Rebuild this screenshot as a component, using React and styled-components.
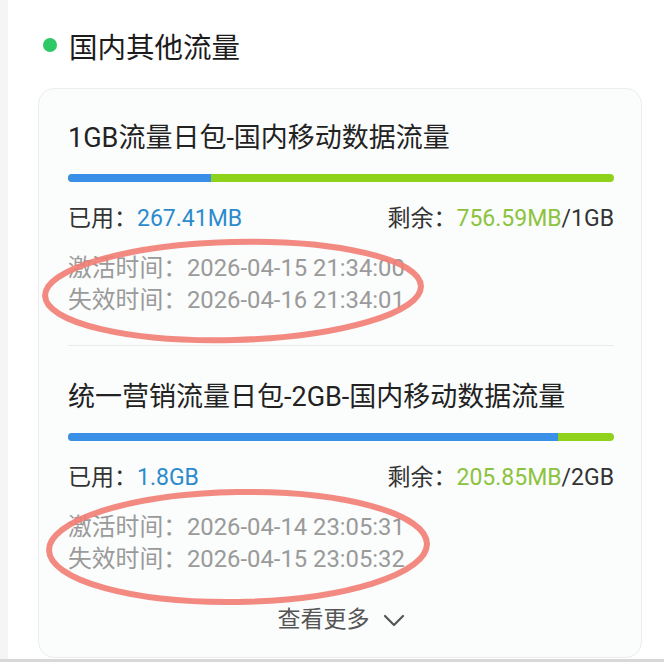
import React from 'react'
import styled, { createGlobalStyle } from 'styled-components'

const GlobalStyle = createGlobalStyle`
    html, body {
        margin: 0;
        padding: 0;
        background: #f5f5f5;
    }
    body {
        font-family: Roboto, "Noto Sans CJK SC", sans-serif;
    }
`

const Page = styled.div`
    width: 664px;
    height: 662px;
    overflow: hidden;
    background: #f5f5f5;
    border-bottom: 3px solid #d8d8d8;
    box-sizing: border-box;
`

const Panel = styled.div`
    margin-left: 8px;
    height: 659px;
    background: #ffffff;
    padding: 25px 22px 0 30px;
    box-sizing: border-box;
`

const Heading = styled.div`
    display: flex;
    align-items: center;
    gap: 12px;
    height: 40px;
    padding-left: 5px;
    font-size: 28.5px;
    color: #1c1c1c;
`

const Dot = styled.span`
    width: 14px;
    height: 14px;
    border-radius: 50%;
    background: #2ec866;
`

const Card = styled.div`
    margin-top: 23px;
    border: 1px solid #e9edef;
    border-radius: 16px;
    background: #fbfcfc;
    padding: 31px 27px 20px 29px;
    height: 570px;
    box-sizing: border-box;
`

const Item = styled.div`
    padding-bottom: 29px;
    border-bottom: 1px solid #ebebeb;

    & + & {
        padding-top: 33px;
        padding-bottom: 0;
        border-bottom: none;
    }
`

const Title = styled.div`
    font-size: 27px;
    line-height: 36px;
    color: #222;
    white-space: nowrap;
`

const Bar = styled.div`
    display: flex;
    height: 8px;
    margin-top: 18px;
    border-radius: 4px;
    overflow: hidden;
    background: #8fd21b;
`

const BarUsed = styled.div`
    height: 100%;
    background: #3a8fe6;
`

const UsageRow = styled.div`
    display: flex;
    justify-content: space-between;
    margin-top: 21px;
    font-size: 23px;
    line-height: 32px;
    color: #333;
`

const Value = styled.span`
    color: ${p => (p.$tone === 'green' ? '#8cc33e' : '#2c8bcc')};
`

const Dates = styled.div`
    position: relative;
    margin-top: 17px;
    font-size: 23.8px;
    line-height: 32px;
    color: #9a9a9a;
    white-space: nowrap;
`

const Circle = styled.svg`
    position: absolute;
    pointer-events: none;
    overflow: visible;
`

const More = styled.div`
    display: flex;
    justify-content: center;
    align-items: center;
    gap: 13px;
    margin-top: 29px;
    font-size: 23px;
    line-height: 32px;
    color: #555;
`

const packs = [
    {
        name: '1GB流量日包-国内移动数据流量',
        used: '267.41MB',
        left: '756.59MB',
        total: '1GB',
        pct: 26.1,
        start: '2026-04-15 21:34:00',
        end: '2026-04-16 21:34:01',
        mark: { left: -26, top: -13, w: 382, h: 104, rot: -1.5 },
    },
    {
        name: '统一营销流量日包-2GB-国内移动数据流量',
        used: '1.8GB',
        left: '205.85MB',
        total: '2GB',
        pct: 89.8,
        start: '2026-04-14 23:05:31',
        end: '2026-04-15 23:05:32',
        mark: { left: -22, top: -22, w: 384, h: 116, rot: -1 },
    },
]

function Mark({ left, top, w, h, rot }) {
    return (
        <Circle
            width={w}
            height={h}
            viewBox={`0 0 ${w} ${h}`}
            style={{ left, top }}
        >
            <ellipse
                cx={w / 2}
                cy={h / 2}
                rx={w / 2 - 3}
                ry={h / 2 - 3}
                fill="none"
                stroke="#f27d74"
                strokeOpacity="0.9"
                strokeWidth="6"
                transform={`rotate(${rot} ${w / 2} ${h / 2})`}
            />
        </Circle>
    )
}

function App() {
    return (
        <>
            <GlobalStyle />
            <Page>
                <Panel>
                    <Heading>
                        <Dot />
                        国内其他流量
                    </Heading>
                    <Card>
                        {packs.map(p => (
                            <Item key={p.name}>
                                <Title>{p.name}</Title>
                                <Bar>
                                    <BarUsed style={{ width: `${p.pct}%` }} />
                                </Bar>
                                <UsageRow>
                                    <span>
                                        已用：<Value>{p.used}</Value>
                                    </span>
                                    <span>
                                        剩余：<Value $tone="green">{p.left}</Value>/{p.total}
                                    </span>
                                </UsageRow>
                                <Dates>
                                    <div>激活时间：{p.start}</div>
                                    <div>失效时间：{p.end}</div>
                                    <Mark {...p.mark} />
                                </Dates>
                            </Item>
                        ))}
                        <More>
                            查看更多
                            <svg width="22" height="13" viewBox="0 0 22 13">
                                <path
                                    d="M2 2 L11 11 L20 2"
                                    fill="none"
                                    stroke="#555"
                                    strokeWidth="2.2"
                                    strokeLinecap="round"
                                    strokeLinejoin="round"
                                />
                            </svg>
                        </More>
                    </Card>
                </Panel>
            </Page>
        </>
    )
}

export default App
